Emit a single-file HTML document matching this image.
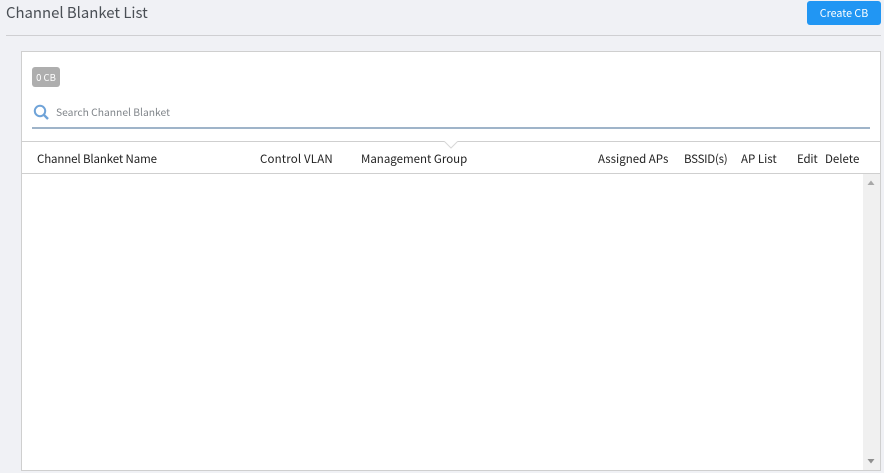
<!DOCTYPE html>
<html><head><meta charset="utf-8"><style>
html,body{margin:0;padding:0;width:884px;height:473px;overflow:hidden;background:#f0f1f5;font-family:"Noto Sans CJK SC","Liberation Sans",sans-serif}
.a{position:absolute;white-space:nowrap}
.h{font-size:11.500px;line-height:16px;top:151px;color:#222}
</style></head><body>
<div class="a" style="left:6px;top:2px;font-size:14.900px;line-height:22px;color:#4a4f55">Channel Blanket List</div>
<div class="a" style="left:807px;top:1px;width:74px;height:24px;background:#2196f3;border-radius:3px;color:#fff;font-size:10.700px;line-height:26px;text-align:center">Create CB</div>
<div class="a" style="left:6px;top:35px;width:875px;height:1px;background:#cfcfd2"></div>
<div class="a" style="left:21px;top:51px;width:858px;height:418px;background:#fff;border:1px solid #cfcfcf"></div>
<div class="a" style="left:32px;top:67px;width:28px;height:20px;background:#aeaeae;border-radius:3px;color:#fff;font-size:9.500px;line-height:21px;text-align:center">0 CB</div>
<svg class="a" style="left:33px;top:104px" width="16" height="17" viewBox="0 0 16 17"><circle cx="7" cy="7" r="5.200" fill="none" stroke="#6fa3d8" stroke-width="2"/><path d="M10.800 10.800L15 15" stroke="#6fa3d8" stroke-width="2.400"/></svg>
<div class="a" style="left:56px;top:104px;font-size:10.300px;line-height:16px;color:#80858a">Search Channel Blanket</div>
<div class="a" style="left:32px;top:127px;width:838px;height:2px;background:#9fb4c9"></div>
<div class="a" style="left:22px;top:141px;width:858px;height:1px;background:#cfcfcf"></div>
<svg class="a" style="left:444px;top:141px" width="14" height="8" viewBox="0 0 14 8"><path d="M0 0L7 7L14 0" fill="#fff" stroke="#d8d8d8"/><path d="M1 0H13" stroke="#fff"/></svg>
<div class="a h" style="left:37px;letter-spacing:-.13px">Channel Blanket Name</div>
<div class="a h" style="left:260px;letter-spacing:.15px">Control VLAN</div>
<div class="a h" style="left:361px">Management Group</div>
<div class="a h" style="left:598px">Assigned APs</div>
<div class="a h" style="left:684px;letter-spacing:-.25px">BSSID(s)</div>
<div class="a h" style="left:741px">AP List</div>
<div class="a h" style="left:797px;letter-spacing:-.2px">Edit</div>
<div class="a h" style="left:825px">Delete</div>
<div class="a" style="left:22px;top:173px;width:858px;height:1px;background:#cfcfcf"></div>
<div class="a" style="left:863px;top:174px;width:17px;height:296px;background:#f0f0f0"></div>
<svg class="a" style="left:863px;top:174px" width="17" height="296" viewBox="0 0 17 296"><path d="M4.500 11L8 6.500L11.500 11Z" fill="#a8a8a8"/><path d="M4.500 285H11.500L8 289.500Z" fill="#8f8f8f"/></svg>
</body></html>
